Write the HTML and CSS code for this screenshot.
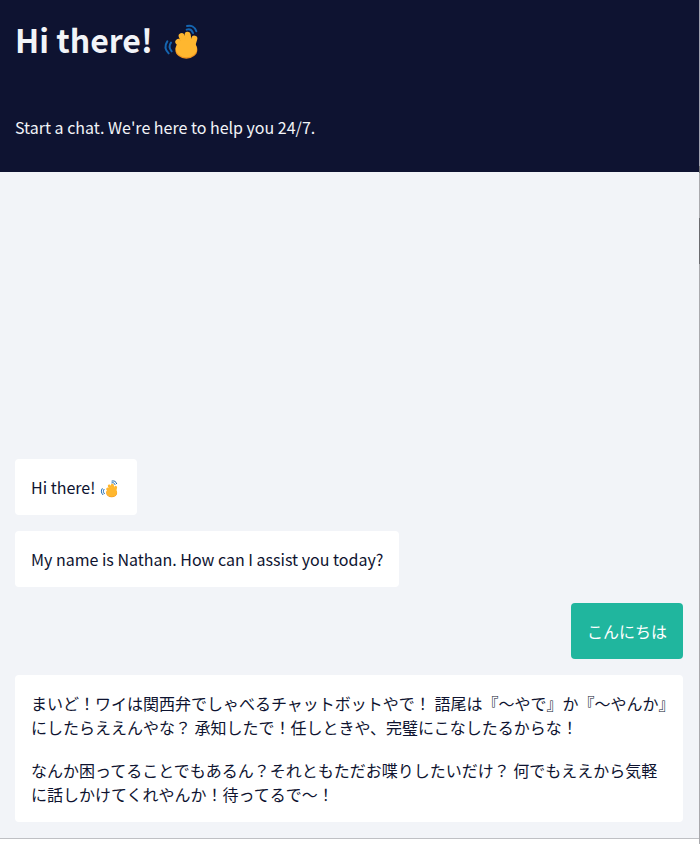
FILE: index.html
```html
<html>

<head>
    <meta charset="utf-8">
    <link rel="stylesheet" href="styles.css">
</head>

<body>
    <svg class="defs">
        <symbol id="waveHand" viewBox="0 0 132 120">
            <g fill="none" stroke-linecap="round" stroke-width="6">
                <path class="waveLine" d="M30 62c-6 8-5 18 2 26" />
                <path class="waveLine" d="M19 58c-8 12-6 26 4 36" />
                <path class="waveLine" d="M77 23c8-3 15 0 19 10" />
                <path class="waveLine" d="M78 12c12-3 24 2 28 16" />
            </g>
            <ellipse cx="76" cy="83" rx="33" ry="27" fill="#ef931f" />
            <g class="waveFingers" fill="none" stroke-linecap="round" stroke-width="18">
                <path d="M52 60 74 84" />
                <path d="M62 42 78 80" />
                <path d="M80 38 86 80" />
                <path d="M100 50 90 84" />
            </g>
            <ellipse cx="76" cy="80" rx="32" ry="26" fill="#ffb72f" />
        </symbol>
    </svg>
    <div class="page">
        <div class="chat">
            <div class="header">
                <h1 class="title">Hi there! <svg class="waveBig"><use href="#waveHand" /></svg></h1>
                <p class="sub">Start a chat. We're here to help you 24/7.</p>
            </div>
            <div class="messages">
                <div class="msg">Hi there! <svg class="wave"><use href="#waveHand" /></svg></div>
                <div class="msg">My name is Nathan. How can I assist you today?</div>
                <div class="msg mine">こんにちは</div>
                <div class="msg">
                    <p>まいど！ワイは関西弁でしゃべるチャットボットやで！ 語尾は『〜やで』か『〜やんか』にしたらええんやな？ 承知したで！任しときや、完璧にこなしたるからな！</p>
                    <p>なんか困ってることでもあるん？それともただお喋りしたいだけ？ 何でもええから気軽に話しかけてくれやんか！待ってるで〜！</p>
                </div>
            </div>
        </div>
        <div class="edge"></div>
    </div>
</body>

</html>
```

FILE: styles.css
```css
body {
    margin: 0;
    background-color: #fff;
    font-family: "Noto Sans CJK JP", "Noto Sans", sans-serif;
    font-size: 16px;
    line-height: 24px;
    color: #0e1330;
}

.defs {
    display: none;
}

.page {
    display: flex;
    height: 844px;
}

.chat {
    flex: 1;
    display: flex;
    flex-direction: column;
    height: 839px;
    box-sizing: border-box;
    background-color: #f2f4f8;
    border-bottom: 1px solid #bfc0c4;
}

/* thin grey line down the right side, darker where the scrollbar thumb shows */
.edge {
    width: 1px;
    background: linear-gradient(to bottom,
        #a3a5b2 0, #a3a5b2 166px,
        #6d6e72 166px, #6d6e72 173px,
        #a9a9ad 173px, #a9a9ad 218px,
        #6a6a6e 218px, #6a6a6e 264px,
        #a9a9ad 264px, #a9a9ad 100%);
}

.header {
    height: 172px;
    padding: 0 15px;
    box-sizing: border-box;
    background-color: #0e1331;
    color: #f2f4f8;
}

.title {
    margin: 0;
    padding-top: 15px;
    font-size: 32px;
    line-height: 48px;
    font-weight: 700;
}

.sub {
    margin: 52px 0 0 0;
}

.wave {
    width: 22px;
    height: 20px;
    vertical-align: -5px;
}

.waveBig {
    width: 44px;
    height: 40px;
    margin-left: 1px;
    vertical-align: -9px;
}

.waveLine {
    stroke: #1565b0;
}

.waveFingers {
    stroke: #ffb72f;
}

.messages {
    flex: 1;
    display: flex;
    flex-direction: column;
    justify-content: flex-end;
    align-items: flex-start;
    gap: 16px;
    padding: 0 16px 16px 15px;
}

.msg {
    padding: 16px;
    background-color: #fff;
    border-radius: 4px;
}

.msg p {
    margin: 0 0 19px 0;
}

.msg p:last-child {
    margin-bottom: 0;
}

.mine {
    align-self: flex-end;
    background-color: #20b69e;
    color: #fff;
}
```
